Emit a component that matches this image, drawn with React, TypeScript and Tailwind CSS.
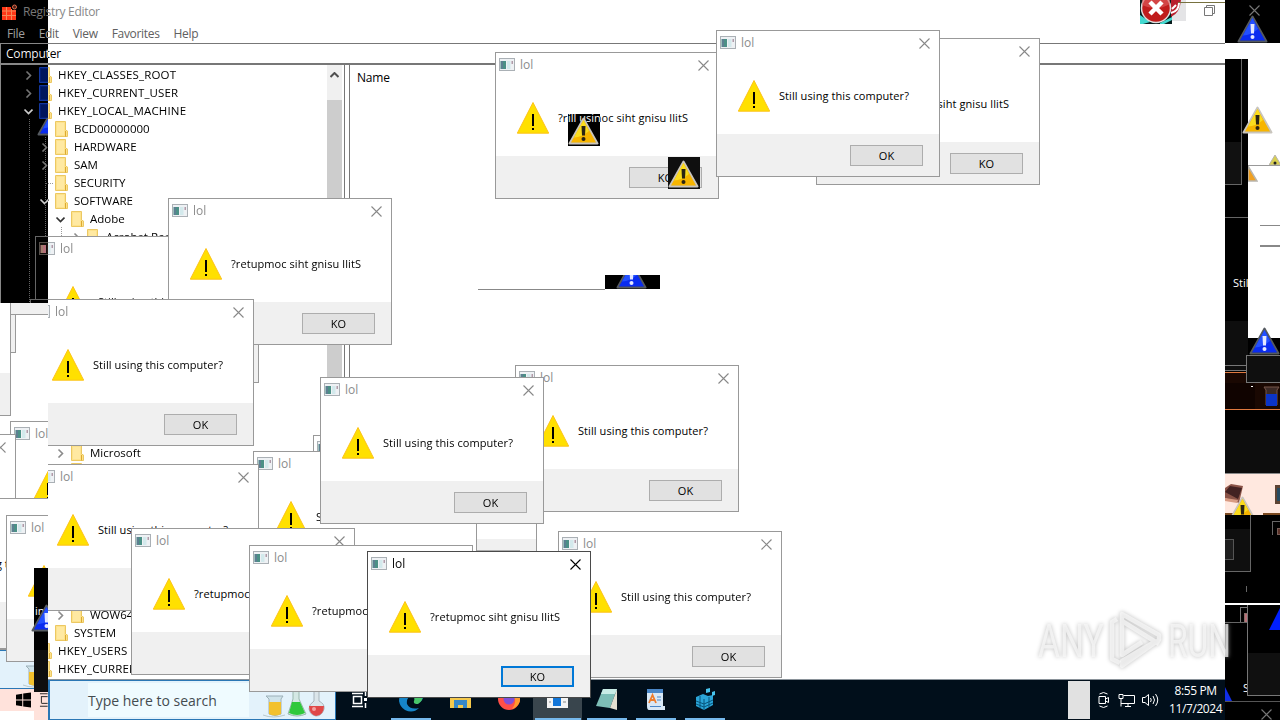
import React from 'react';
import { clsx } from 'clsx';

interface DialogProps {
  x: number;
  y: number;
  reversed?: boolean;
  active?: boolean;
}

interface SignProps {
  tone: 'blue' | 'gold';
  className?: string;
}

const MESSAGE = 'Still using this computer?';
const MESSAGE_REVERSED = '?retupmoc siht gnisu llitS';

const treeRows = [
  { label: 'HKEY_CLASSES_ROOT', depth: 0, state: 'closed' },
  { label: 'HKEY_CURRENT_USER', depth: 0, state: 'closed' },
  { label: 'HKEY_LOCAL_MACHINE', depth: 0, state: 'open' },
  { label: 'BCD00000000', depth: 1, state: '' },
  { label: 'HARDWARE', depth: 1, state: 'closed' },
  { label: 'SAM', depth: 1, state: 'closed' },
  { label: 'SECURITY', depth: 1, state: '' },
  { label: 'SOFTWARE', depth: 1, state: 'open' },
  { label: 'Adobe', depth: 2, state: 'open' },
  { label: 'Acrobat Reader', depth: 3, state: 'closed' }
];

const lowerRows = [
  { label: 'Microsoft', depth: 2, state: 'closed' },
  { label: '', depth: 2, state: '' }
];

const bottomRows = [
  { label: 'WOW6432Node', depth: 2, state: 'closed' },
  { label: 'SYSTEM', depth: 1, state: '' },
  { label: 'HKEY_USERS', depth: 0, state: '' },
  { label: 'HKEY_CURRENT_CONFIG', depth: 0, state: '' }
];

const indents = ['pl-[22px]', 'pl-[38px]', 'pl-[54px]', 'pl-[70px]'];

const dialogs: DialogProps[] = [
  { x: 495, y: 52, reversed: true },
  { x: 816, y: 38, reversed: true },
  { x: 716, y: 30 },
  { x: 35, y: 236 },
  { x: 168, y: 198, reversed: true },
  { x: 30, y: 299 },
  { x: 313, y: 435 },
  { x: 253, y: 451 },
  { x: 35, y: 464 },
  { x: 515, y: 365 },
  { x: 320, y: 377 },
  { x: 558, y: 531 },
  { x: 131, y: 528, reversed: true },
  { x: 249, y: 545, reversed: true },
  { x: 367, y: 551, reversed: true, active: true }
];

const AppIcon: React.FC = () => (
  <svg width="16" height="14" viewBox="0 0 16 14" className="shrink-0">
    <rect x="0.5" y="0.5" width="15" height="12" fill="#eef1f4" stroke="#aab0b5" />
    <rect x="1.5" y="3" width="5.5" height="8" fill="#4b9086" />
    <rect x="2" y="3" width="2" height="8" fill="#5d7f91" />
    <rect x="8" y="3" width="3.5" height="8" fill="#d3e9ec" />
    <rect x="12.5" y="3" width="1.5" height="3" fill="#b09aa8" />
  </svg>
);

const CloseIcon: React.FC<{ color: string }> = ({ color }) => (
  <svg width="11" height="11" viewBox="0 0 11 11" className="shrink-0">
    <path d="M0.5 0.5L10.5 10.5M10.5 0.5L0.5 10.5" stroke={color} strokeWidth="1.1" />
  </svg>
);

const WarningIcon: React.FC = () => (
  <svg width="32" height="32" viewBox="0 0 32 32" className="shrink-0">
    <path d="M16 0.5L31.7 31.2H0.3Z" fill="#ffe000" stroke="#fcc21b" strokeWidth="1" />
    <rect x="15" y="12" width="2" height="12" fill="#000" />
    <rect x="15" y="26" width="2" height="2" fill="#000" />
  </svg>
);

const Dialog: React.FC<DialogProps> = ({ x, y, reversed, active }) => (
  <div
    className={clsx(
      'absolute flex h-[147px] w-[224px] flex-col border bg-white',
      active ? 'border-[#4a4a4a]' : 'border-[#999999]'
    )}
    style={{ left: x, top: y }}
  >
    <div className="flex h-6 items-center pl-[3px] pr-[9.5px]">
      <AppIcon />
      <span className={clsx('flex-1 pl-[5px] text-xs leading-4', active ? 'text-black' : 'text-[#8c8c8c]')}>lol</span>
      <CloseIcon color={active ? '#000000' : '#888888'} />
    </div>
    <div className="flex h-[79px] items-center gap-[9px] pl-[21px] pt-[2px]">
      <WarningIcon />
      <span className="whitespace-nowrap text-[11px] leading-4 tracking-[0.08px] text-black">
        {reversed ? MESSAGE_REVERSED : MESSAGE}
      </span>
    </div>
    <div className="flex flex-1 items-start justify-end bg-[#f0f0f0] pr-4 pt-[11px]">
      <span
        className={clsx(
          'flex h-[21px] w-[73px] items-center justify-center bg-[#e1e1e1] pt-px text-[11px] text-black',
          active ? 'border-2 border-[#0078d7]' : 'border border-[#adadad]'
        )}
      >
        {reversed ? 'KO' : 'OK'}
      </span>
    </div>
  </div>
);

// Glossy warning sign left behind by the cursor
const Sign: React.FC<SignProps> = ({ tone, className }) => (
  <svg width="31" height="28" viewBox="0 0 31 28" className={clsx('shrink-0', className)}>
    <path
      d="M15.5 1.5L29.5 26.5H1.5Z"
      fill={tone === 'blue' ? '#3d414c' : '#b8b5ae'}
      stroke={tone === 'blue' ? '#555a60' : '#c9c5bd'}
      strokeWidth="2"
      strokeLinejoin="round"
    />
    <path d="M15.5 3L28 25.5H3Z" fill={tone === 'blue' ? '#0a2cf0' : '#f7b500'} />
    <path d="M15.5 3L21 14Q14 20 6 20.5Z" fill={tone === 'blue' ? '#2350ff' : '#fbdc1e'} />
    <path d="M13.5 9H17.5L17 18.5H14Z" fill={tone === 'blue' ? '#e4e8ff' : '#2b2413'} />
    <circle cx="15.5" cy="22" r="2" fill={tone === 'blue' ? '#e4e8ff' : '#2b2413'} />
  </svg>
);

const Chevron: React.FC<{ state: string }> = ({ state }) => (
  <svg width="10" height="10" viewBox="0 0 10 10" className="shrink-0">
    {state === 'closed' && <path d="M3.500 1.500L7.500 5.500L3.500 9.500" fill="none" stroke="#8b8b8b" strokeWidth="1.6" />}
    {state === 'open' && <path d="M1.500 3.500L5.500 7.500L9.500 3.500" fill="none" stroke="#333333" strokeWidth="1.7" />}
  </svg>
);

const FolderIcon: React.FC = () => (
  <svg width="13" height="16" viewBox="0 0 13 16" className="shrink-0">
    <path d="M0.5 0.5H10.5V9L12.5 10V15.5H0.5Z" fill="#fde28c" stroke="#ecc862" />
    <path d="M2 2H9V14H2Z" fill="#ffe9a2" />
    <path d="M10.5 10V15.5" stroke="#ddaa30" />
  </svg>
);

const TreeRow: React.FC<{ label: string; depth: number; state: string }> = ({ label, depth, state }) => (
  <div className={clsx('flex h-[18px] items-center gap-[6px] whitespace-nowrap', indents[depth])}>
    <Chevron state={state} />
    <FolderIcon />
    <span className={clsx('text-[11.5px] leading-4', depth === 0 ? 'tracking-[0.15px]' : 'tracking-[0px]')}>{label}</span>
  </div>
);

const RegistryEditor: React.FC = () => (
  <div className="flex h-[679px] w-[1225px] flex-col overflow-hidden bg-white text-black">
    <div className="flex h-6 items-center pl-[2px] pr-[10px]">
      <svg width="16" height="16" viewBox="0 0 16 16">
        <path d="M0 3H9V6H14V16H0Z" fill="#00c8e8" />
        <path d="M0 7H14M0 11.5H14M4.5 3V16M9.5 5V16" stroke="#0878a8" />
        <circle cx="12.5" cy="3" r="2" fill="#b8dce4" stroke="#2098b8" />
      </svg>
      <span className="ml-[5px] flex-1 text-xs tracking-[-0.3px] text-[#888888]">Registry Editor</span>
      <svg width="11" height="11" viewBox="0 0 11 11" className="mb-1">
        <path d="M0.5 2.5H8.5V10.5H0.5ZM2.5 2.5V0.5H10.5V8.5H8.5" fill="none" stroke="#777" />
      </svg>
    </div>
    <div className="flex h-[19px] items-center gap-[14px] pl-[7px] text-xs tracking-[-0.32px] text-[#606060]">
      <span>File</span>
      <span>Edit</span>
      <span>View</span>
      <span>Favorites</span>
      <span>Help</span>
    </div>
    <div className="flex h-[22px] items-center border-y border-b-2 border-l border-[#777777] pl-[5px] text-xs tracking-[-0.2px]">
      Computer
    </div>
    <div className="flex flex-1">
      <div className="flex w-[345px] border-x border-[#777777]">
        <div className="relative flex flex-1 flex-col overflow-hidden pt-px">
          {treeRows.map((row) => <TreeRow key={row.label} {...row} />)}
          <div className="h-[198px]" />
          {lowerRows.map((row, i) => <TreeRow key={i} {...row} />)}
          <div className="h-[126px]" />
          {bottomRows.map((row) => <TreeRow key={row.label} {...row} />)}
          <svg width="40" height="200" viewBox="0 0 40 200" className="absolute left-[28px] top-[54px]">
            <path d="M0.5 0V200M16.5 18V200M32.5 108V200M17 64.5H24" stroke="#999" strokeDasharray="1 1" />
          </svg>
        </div>
        <div className="mr-[2px] flex w-[15px] flex-col bg-[#cdcdcd]">
          <div className="flex h-[35px] justify-center bg-[#f0f0f0] pt-[7px]">
            <svg width="9" height="6" viewBox="0 0 9 6">
              <path d="M0.5 5L4.5 1L8.5 5" fill="none" stroke="#505050" strokeWidth="2" />
            </svg>
          </div>
        </div>
      </div>
      <div className="ml-1 flex-1 border-l border-[#777777] pl-[7px] pt-[5px] text-xs tracking-[-0.2px]">Name</div>
    </div>
  </div>
);

const Flasks: React.FC = () => (
  <svg width="64" height="30" viewBox="0 0 64 30" className="shrink-0">
    <path d="M3 7H20L18 10V25Q12 28 6 25V10Z" fill="#cfe3ea" stroke="#9cb0b8" />
    <path d="M6 13H18V25Q12 28 6 25Z" fill="#f2c12e" />
    <path d="M0 26Q10 30 22 26" stroke="#b8c8cc" fill="none" />
    <path d="M30 0H36V10L43 25Q34 29 25 25L30 10Z" fill="#d4e8e4" stroke="#9ab8ae" />
    <path d="M29 13H37L42 24Q34 28 26 24Z" fill="#2fc83c" />
    <path d="M51 0H56V12Q62 15 61 20Q59 27 53 27Q47 26 46 20Q46 15 51 12Z" fill="#dbe5ea" stroke="#a8b4bc" />
    <path d="M46 17H61Q61 26 53 27Q46 25 46 17Z" fill="#e04848" />
    <circle cx="51" cy="20" r="2" fill="#f4a0a0" />
  </svg>
);

const taskbarIcons = [
  {
    id: 'edge',
    line: true,
    art: (
      <>
        <path d="M0 13Q0 2 12 0Q24 0 24 10Q22 16 15 15Q18 10 13 8Q7 9 8 16Q11 22 20 20Q14 26 6 22Q1 19 0 13Z" fill="#1685c8" />
        <path d="M9 3Q17 -1 22 4Q26 12 19 16Q14 16 15 13Q17 7 9 3Z" fill="#48c76a" />
      </>
    )
  },
  {
    id: 'explorer',
    line: false,
    art: (
      <>
        <path d="M2 3H10L12 5H23V20H2Z" fill="#f5c94c" />
        <path d="M6 12H19V20H15V17H10V20H6Z" fill="#3788c8" />
      </>
    )
  },
  {
    id: 'firefox',
    line: false,
    art: (
      <>
        <circle cx="12" cy="11" r="11" fill="#ff4f48" />
        <path d="M12 0Q24 2 23 13Q21 19 15 21Q20 14 17 9Q15 6 12 6Z" fill="#ff9a2c" />
        <circle cx="12" cy="11" r="5.5" fill="#8050d8" />
      </>
    )
  },
  {
    id: 'lol',
    line: true,
    art: (
      <>
        <rect x="1" y="3" width="21" height="17" fill="#f4f4f4" />
        <rect x="7" y="6" width="8" height="12" fill="#1376d8" />
        <path d="M3 8H5M3 14H5M17 9H20M17 14H20" stroke="#888" />
      </>
    )
  },
  {
    id: 'notepad',
    line: true,
    art: (
      <>
        <path d="M8 1H22L15 20L1 18Z" fill="#7dbeb7" />
        <path d="M22 1L22 22L15 20Z" fill="#e4e0d2" />
        <path d="M8 1H22L20 6H6Z" fill="#c8ece6" />
      </>
    )
  },
  {
    id: 'wordpad',
    line: true,
    art: (
      <>
        <path d="M3 1H19V18H21V22H5Q3 22 3 18Z" fill="#d8e8f6" />
        <path d="M3 1H19V5H3Z" fill="#4a87c8" />
        <path d="M5 15L8.5 7L12 15M6 12H11" stroke="#ed7c2d" strokeWidth="1.8" fill="none" />
        <path d="M13 9H17M13 12H17M6 18.5H17" stroke="#4a87c8" />
      </>
    )
  },
  {
    id: 'regedit',
    line: true,
    art: (
      <>
        <path d="M3 9L10 6L15 8L20 7V17L11 22L3 18Z" fill="#2ba5d8" />
        <path d="M3 13L11 16L20 12M7 8V20M11 11V22M16 9V19M3 16L11 19L20 15" stroke="#07557c" fill="none" />
        <path d="M13 1L17 0V4L13 5ZM19 4L22 3V7L19 8Z" fill="#48c4ee" />
      </>
    )
  }
];

const Taskbar: React.FC = () => (
  <div className="ml-12 flex h-[41px] w-[1177px] border-t border-[#8a9299] bg-[#010f1b]">
    <div className="flex w-[288px] items-center border border-l-2 border-[#2a77b5] bg-[#e3f2fb] pl-[38px]">
      <span className="mr-auto whitespace-nowrap bg-[#effbff] pr-8 pt-[2px] text-[14px] leading-8 text-[#444c50]">
        Type here to search
      </span>
      <span className="mr-[8px] flex pt-2"><Flasks /></span>
    </div>
    <div className="flex w-[50px] items-center pl-4">
      <svg width="16" height="16" viewBox="0 0 16 16">
        <path d="M0 1.5H11M0 14.5H11M1.5 4.5H9.5V11.5H1.5ZM13.5 0V4M13.5 11V16" fill="none" stroke="#fff" strokeWidth="1.5" />
        <rect x="12" y="6" width="3" height="3" fill="#fff" />
      </svg>
    </div>
    {taskbarIcons.map((item) => (
      <div key={item.id} className={clsx('flex w-[49px] flex-col items-center', item.id === 'lol' && 'bg-[#39454d]')}>
        <svg width="24" height="24" viewBox="0 0 24 24" className="mt-2">{item.art}</svg>
        {item.line && <div className={clsx('mt-auto h-[2px] bg-[#76b9ed]', item.id === 'lol' ? 'w-[46px]' : 'w-10')} />}
      </div>
    ))}
    <div className="flex-1" />
    <div className="mb-px mt-px w-[22px] bg-[#e1e1e1]" />
    <div className="flex w-[135px] items-center pl-2">
      <svg width="12" height="16" viewBox="0 0 12 16" fill="none" stroke="#fff">
        <path d="M1 4.5H7.5V11.5H1ZM7.5 7L10.5 5.5V10.5L7.5 9M1.5 2Q5.5 -1 9.5 2M1.5 14Q5.5 17 9.5 14" />
      </svg>
      <svg width="17" height="15" viewBox="0 0 17 15" fill="none" stroke="#fff" className="ml-2">
        <path d="M5.5 2.5H16.5V10.5H3M1 1.5H5V5.5H1ZM3 5.5V13.5M7 13.5H13M10 10.5V13.5" />
      </svg>
      <svg width="17" height="14" viewBox="0 0 17 14" fill="none" stroke="#fff" className="ml-[7px]">
        <path d="M0.5 4.5H3L6.5 1.5V12.5L3 9.5H0.5ZM8.5 5Q10 7 8.5 9M11 3Q14 7 11 11M13.5 1Q18 7 13.5 13" />
      </svg>
      <div className="ml-[10px] whitespace-nowrap text-center text-[12px] leading-[18px] tracking-[-0.4px] text-white">
        8:55 PM
        <br />
        11/7/2024
      </div>
    </div>
  </div>
);

// Stale copy of the desktop along the left edge
const LeftStrip: React.FC = () => (
  <div className="absolute left-0 top-[303px] flex h-[417px] w-12 flex-col overflow-hidden bg-white">
    <div className="relative h-[195px] w-12 shrink-0 overflow-hidden">
      <Dialog x={10} y={-135} />
      <div className="absolute left-[11px] top-[12px] flex h-[104px] w-[6px] flex-col bg-white">
        <div className="h-[38px] w-[5px] border-b border-r border-[#999] bg-[#f0f0f0]" />
      </div>
      <Dialog x={-213} y={-34} />
      <Dialog x={10} y={118} />
      <Dialog x={-208} y={131} />
    </div>
    <div className="flex h-[152px] shrink-0 flex-col border-y border-[#999]">
      <span className="-ml-1 mt-[57px] h-[46px] whitespace-nowrap text-[11px] leading-4">g t</span>
      <div className="flex-1 border-b border-[#999] bg-[#f0f0f0]" />
    </div>
    <div className="h-[39px] shrink-0 overflow-hidden border-y border-[#2a77b5] bg-[#e3f2fb] pl-[23px] pt-2">
      <Flasks />
    </div>
    <div className="flex h-[22px] shrink-0 items-start gap-2 bg-[#ffe2db] pl-4 pt-[3px]">
      <svg width="16" height="16" viewBox="0 0 16 16">
        <path d="M0 2.5L6.5 1.5V7.5H0ZM7.5 1.3L16 0V7.5H7.5ZM0 8.5H6.5V14.5L0 13.5ZM7.5 8.5H16V16L7.5 14.7Z" fill="#000" />
      </svg>
      <svg width="9" height="16" viewBox="0 0 9 16">
        <path d="M1 1.5H9M1 14.5H9M2.5 4V11M2.5 4.5H9M2.5 11.5H9" stroke="#222" fill="none" />
      </svg>
    </div>
    <div className="ml-[34px] flex-1 bg-[#ffe2db]" />
    <Dialog x={6} y={212} />
    <div className="absolute left-[34px] top-[265px] flex h-[124px] w-[14px] flex-col overflow-hidden bg-black">
      <span className="h-[82px] pl-px pt-[35px] text-[11px] leading-4 text-white">in</span>
      <div className="flex-1 bg-[#0f0f0f]" />
    </div>
    <Sign tone="blue" className="absolute left-[31px] top-[301px]" />
  </div>
);

// Stale copy of the desktop along the right edge, stacked from top to bottom
const RightStrip: React.FC = () => (
  <div className="absolute left-[1225px] top-0 flex h-[720px] w-[55px] flex-col overflow-hidden bg-black">
    <div className="flex h-[43px] shrink-0 flex-col pl-3 pt-[5px]">
      <span className="flex pl-3"><CloseIcon color="#777777" /></span>
      <Sign tone="blue" className="-mt-px" />
    </div>
    <div className="h-4 shrink-0 bg-white" />
    <div className="flex h-[312px] shrink-0">
      <div className="flex w-[23px] flex-col">
        <div className="flex h-[126px] w-[17px] flex-col justify-end border-b border-r border-[#666]">
          <div className="h-[42px] bg-[#111]" />
        </div>
        <div className="mt-8 h-px bg-[#666]" />
        <span className="h-[103px] overflow-hidden pl-2 pt-[57px] text-[11px] leading-4 text-white">Still</span>
        <div className="flex flex-1 flex-col border-b border-[#777] bg-[#0e0e0e] pt-11">
          <div className="h-px bg-[#777]" />
        </div>
      </div>
      <div className="flex h-[279px] w-8 flex-col bg-white">
        <div className="flex h-[107px] flex-col items-end justify-between border-b border-[#999]">
          <Sign tone="gold" className="mr-[7px] mt-[47px]" />
          <svg width="11" height="11" viewBox="0 0 11 11">
            <path d="M6 1L12 11H0Z" fill="#d8cf50" stroke="#b8b5ae" />
            <circle cx="6" cy="9" r="1.5" fill="#222" />
          </svg>
        </div>
        <svg width="10" height="16" viewBox="0 0 10 16">
          <path d="M0 0L9 15H0Z" fill="#f0a020" stroke="#b8b5ae" strokeWidth="1.5" />
        </svg>
        <div className="ml-3 mt-[43px] h-px bg-[#888]" />
        <div className="ml-3 mt-[19px] h-[2px] bg-[#888]" />
      </div>
    </div>
    <div className="mt-px flex h-[38px] shrink-0 items-end justify-between border-y border-[#e0793f] bg-[#1a0802]">
      <div className="h-[26px] w-[30px] bg-[#100300]" />
      <svg width="18" height="24" viewBox="0 0 18 24">
        <path d="M2 2H17L15 5V20H4V5Z" fill="#3b2925" stroke="#755449" />
        <path d="M4 9H15V21H4Z" fill="#0b34c8" />
      </svg>
    </div>
    <div className="mt-5 h-[44px] shrink-0 border-b border-[#888] bg-[#0d0d0d]" />
    <div className="relative h-[41px] shrink-0 overflow-hidden bg-[#ffe8df]">
      <svg width="55" height="41" viewBox="0 0 55 41">
        <path d="M0 14L6 10L18 12L14 29L0 24Z" fill="#8b5448" />
        <path d="M0 18L5 12L17 14L13 25Z" fill="#422222" />
        <path d="M0 24L13 26L12 29L0 27Z" fill="#d89b83" />
        <path d="M50 11H55V30H50Z" fill="#5d4333" />
        <path d="M52 14H55V27H52Z" fill="#264a60" />
        <path d="M0 40H8M38 40H55" stroke="#7c4a20" strokeWidth="2" />
      </svg>
      <Sign tone="gold" className="absolute left-[2px] top-[22px]" />
    </div>
    <div className="flex h-[88px] shrink-0 items-start justify-between">
      <div className="flex h-[57px] w-[26px] flex-col border-b border-r border-[#666] pt-[14px]">
        <div className="flex-1 bg-[#0f0f0f] pt-[10px]">
          <div className="h-[21px] w-[9px] border border-l-0 border-[#555] bg-[#1e1e1e]" />
        </div>
      </div>
      <div className="mt-[6px] h-[14px] w-2 overflow-hidden border-l border-t border-[#666] pl-1 pt-[6px]">
        <div className="h-[7px] w-4 border border-[#775e58] bg-[#5c3228]" />
      </div>
    </div>
    <div className="h-[2px] shrink-0 bg-white" />
    <div className="flex h-[91px] shrink-0">
      <div className="flex w-[22px] flex-col">
        <div className="ml-[15px] mt-[2px] h-4 overflow-hidden border-l border-t border-[#777] pl-[3px] pt-[5px]">
          <div className="h-[10px] w-4 border border-[#88706a] bg-[#b87078]" />
        </div>
        <div className="h-px bg-[#666]" />
        <span className="pl-[18px] pt-[57px] text-[11px] leading-4 text-white">S</span>
      </div>
      <div className="z-10 flex flex-1 flex-col items-end border-b border-l border-[#777] bg-black">
        <svg width="11" height="26" viewBox="0 0 11 26" className="mb-[22px]">
          <path d="M11 3V25H0Z" fill="#001fff" />
        </svg>
        <div className="w-full flex-1 bg-[#101010]" />
      </div>
    </div>
    <svg width="7" height="14" viewBox="0 0 7 14" className="-mt-[9px] shrink-0">
      <path d="M0 0L7 14H0Z" fill="#102ee8" />
    </svg>
    <div className="flex flex-1 justify-center border-t border-[#555] pl-[27px] pt-[7px]">
      <CloseIcon color="#777777" />
    </div>
    <div className="absolute left-[21px] top-[355px] h-[28px] w-9 border border-[#777] bg-[#0f0f0f]" />
    <Sign tone="blue" className="absolute left-6 top-[327px]" />
    <div className="absolute left-[26px] top-[386px] h-px w-[2px] bg-white" />
    <div className="absolute left-[21px] top-[586px] h-[6px] w-px bg-[#666]" />
  </div>
);

const Watermark: React.FC = () => (
  <div className="absolute left-[1038px] top-[609px] flex h-16 w-[194px] items-center justify-between text-[#f8f8f8]/75 drop-shadow-[0_0_2px_#aaaaaa]">
    <span className="w-[66px] origin-left scale-x-[0.73] font-['Roboto'] text-[46px] leading-none">ANY</span>
    <svg width="60" height="64" viewBox="0 0 60 64" fill="none" stroke="currentColor" strokeWidth="4.5" strokeLinejoin="round">
      <path d="M53 35L16 12V5L53 26V31L16 57V52L50 32M16 12V46L36 33" />
      <path d="M11 10L6 13V50L14 54" />
    </svg>
    <span className="w-[64px] origin-left scale-x-[0.69] font-['Roboto'] text-[46px] leading-none">RUN</span>
  </div>
);

const ErrorBadges: React.FC = () => (
  <svg width="85" height="24" viewBox="0 0 85 24" className="absolute left-[1140px] top-0">
    <rect width="32" height="24" fill="#071c1c" />
    <path d="M0 15L10 22L3 24H0ZM20 23L32 17V20L24 24H20Z" fill="#42d9d0" />
    <rect x="32" width="14" height="21" fill="#e4e4e6" />
    <path d="M31 0H41Q40 13 31 17Z" fill="#b81f2c" />
    <path d="M31 13Q39 11 39 3M32 9L36 5" stroke="#fff" strokeWidth="2" fill="none" />
    <circle cx="16" cy="8" r="14.5" fill="#c01c1c" stroke="#dedede" strokeWidth="1.5" />
    <path d="M2 5Q16 12 30 4V-2H2Z" fill="#e06060" opacity=".6" />
    <path d="M10 2L22 14M22 2L10 14" stroke="#fff" strokeWidth="4.5" />
    <path d="M38 2.5H85" stroke="#77713f" />
  </svg>
);

const App: React.FC = () => {
  return (
    <div className="relative h-[720px] w-[1280px] overflow-hidden bg-white font-['Open_Sans','Noto_Sans',sans-serif]">
      <div className="relative isolate flex h-[720px] w-[1280px] flex-col">
        <RegistryEditor />
        <Taskbar />

        {dialogs.map((dialog) => <Dialog key={`${dialog.x}-${dialog.y}`} {...dialog} />)}

        {/* inverted part of the desktop */}
        <div className="absolute left-0 top-0 h-[303px] w-12 bg-white mix-blend-difference" />
      </div>

      <div className="absolute left-[37px] top-[118px] flex h-[18px] w-[11px] items-end overflow-hidden">
        <Sign tone="blue" />
      </div>
      <ErrorBadges />

      <div className="absolute left-[568px] top-[114px] flex h-8 w-8 flex-col overflow-hidden bg-black">
        <span className="-mt-1 h-[7px] whitespace-nowrap text-[11px] leading-4 text-white">ill usin</span>
        <Sign tone="gold" className="relative" />
      </div>
      <div className="absolute left-[668px] top-[157px] flex h-8 w-8 flex-col overflow-hidden bg-[#0f0f0f] pt-[3px]">
        <Sign tone="gold" />
      </div>

      {/* leftover scrap of a moved window */}
      <div className="absolute left-[478px] top-[275px] flex h-[15px] w-[182px]">
        <div className="w-[127px] border-b border-[#888]" />
        <div className="flex h-[14px] flex-1 items-end overflow-hidden bg-black pl-[11px]">
          <Sign tone="blue" />
        </div>
      </div>

      <LeftStrip />
      <RightStrip />
      <Watermark />
    </div>
  );
};

export default App;
